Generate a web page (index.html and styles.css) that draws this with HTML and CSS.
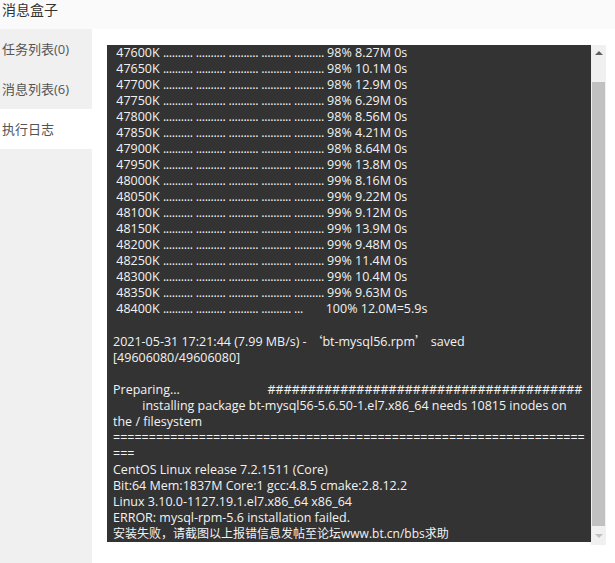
FILE: index.html
```html
<!DOCTYPE html>
<html lang="zh-CN">
<head>
    <meta charset="UTF-8">
    <meta name="viewport" content="width=device-width, initial-scale=1.0">
    <title>消息盒子</title>
    <link rel="stylesheet" href="styles.css">
</head>
<body>
    <div class="box">
        <div class="box-title">消息盒子</div>
        <div class="box-main">
            <ul class="tabs">
                <li class="tab">任务列表(0)</li>
                <li class="tab">消息列表(6)</li>
                <li class="tab active">执行日志</li>
            </ul>
            <div class="content">
                <div class="log-wrap">
<pre class="log"> 47600K <span class="dots">.......... .......... .......... .......... ..........</span> 98% 8.27M 0s
 47650K <span class="dots">.......... .......... .......... .......... ..........</span> 98% 10.1M 0s
 47700K <span class="dots">.......... .......... .......... .......... ..........</span> 98% 12.9M 0s
 47750K <span class="dots">.......... .......... .......... .......... ..........</span> 98% 6.29M 0s
 47800K <span class="dots">.......... .......... .......... .......... ..........</span> 98% 8.56M 0s
 47850K <span class="dots">.......... .......... .......... .......... ..........</span> 98% 4.21M 0s
 47900K <span class="dots">.......... .......... .......... .......... ..........</span> 98% 8.64M 0s
 47950K <span class="dots">.......... .......... .......... .......... ..........</span> 99% 13.8M 0s
 48000K <span class="dots">.......... .......... .......... .......... ..........</span> 99% 8.16M 0s
 48050K <span class="dots">.......... .......... .......... .......... ..........</span> 99% 9.22M 0s
 48100K <span class="dots">.......... .......... .......... .......... ..........</span> 99% 9.12M 0s
 48150K <span class="dots">.......... .......... .......... .......... ..........</span> 99% 13.9M 0s
 48200K <span class="dots">.......... .......... .......... .......... ..........</span> 99% 9.48M 0s
 48250K <span class="dots">.......... .......... .......... .......... ..........</span> 99% 11.4M 0s
 48300K <span class="dots">.......... .......... .......... .......... ..........</span> 99% 10.4M 0s
 48350K <span class="dots">.......... .......... .......... .......... ..........</span> 99% 9.63M 0s
 48400K <span class="dots">.......... .......... .......... .......... ...</span>       100% 12.0M=5.9s

2021-05-31 17:21:44 (7.99 MB/s) - <span class="cjk">‘</span>bt-mysql56.rpm<span class="cjk">’</span> saved
[49606080/49606080]

Preparing...                           #######################################
         installing package bt-mysql56-5.6.50-1.el7.x86_64 needs 10815 inodes on
the / filesystem
=====================================================================
CentOS Linux release 7.2.1511 (Core)
Bit:64 Mem:1837M Core:1 gcc:4.8.5 cmake:2.8.12.2
Linux 3.10.0-1127.19.1.el7.x86_64 x86_64
ERROR: mysql-rpm-5.6 installation failed.
<span class="zh">安装失败，请截图以上报错信息发帖至论坛www.bt.cn/bbs求助</span></pre>
                    <div class="scrollbar">
                        <div class="arrow up"></div>
                        <div class="track"><div class="thumb"></div></div>
                        <div class="arrow down"></div>
                    </div>
                </div>
            </div>
        </div>
    </div>
</body>
</html>
```

FILE: styles.css
```css
body {
    margin: 0;
    font-family: "Open Sans", "Noto Sans CJK SC", sans-serif;
    background-color: #fff;
    color: #333;
}
.box {
    width: 615px;
    height: 563px;
    display: flex;
    flex-direction: column;
    overflow: hidden;
}
.box-title {
    height: 29px;
    line-height: 20px;
    padding-left: 2px;
    font-size: 14px;
    color: #333;
    background-color: #fafafa;
}
.box-main {
    flex: 1;
    display: flex;
}
.tabs {
    list-style: none;
    margin: 0;
    padding: 0;
    width: 92px;
    background-color: #f0f0f0;
}
.tab {
    height: 40px;
    line-height: 40px;
    padding-left: 2px;
    font-size: 13px;
    color: #555;
}
.tab.active {
    background-color: #fff;
}
.content {
    flex: 1;
    padding: 16px 9px 0 15px;
}
.log-wrap {
    display: flex;
    height: 500px;
}
.log {
    flex: 1;
    margin: 0;
    height: 497px;
    padding: 0 6px 0 6px;
    background-color: #333;
    color: #f2f2f2;
    font-family: "Open Sans", "Noto Sans CJK SC", sans-serif;
    font-size: 12.5px;
    line-height: 16px;
    white-space: pre-wrap;
    overflow-wrap: anywhere;
    overflow: hidden;
}
.dots {
    letter-spacing: -0.3px;
}
.cjk {
    font-family: "Noto Sans CJK SC", sans-serif;
}
.zh {
    font-size: 12px;
}
.scrollbar {
    width: 15px;
    background-color: #f0f0f0;
    display: flex;
    flex-direction: column;
}
.arrow {
    height: 17px;
    position: relative;
}
.arrow::after {
    content: "";
    position: absolute;
    left: 4px;
    border-left: 4px solid transparent;
    border-right: 4px solid transparent;
}
.arrow.up::after {
    top: 6px;
    border-bottom: 4px solid #606060;
}
.arrow.down::after {
    top: 6px;
    border-top: 4px solid #c0c0c0;
}
.track {
    flex: 1;
    padding: 20px 1px 2px;
}
.thumb {
    height: 100%;
    background-color: #c1c1c1;
}
```
